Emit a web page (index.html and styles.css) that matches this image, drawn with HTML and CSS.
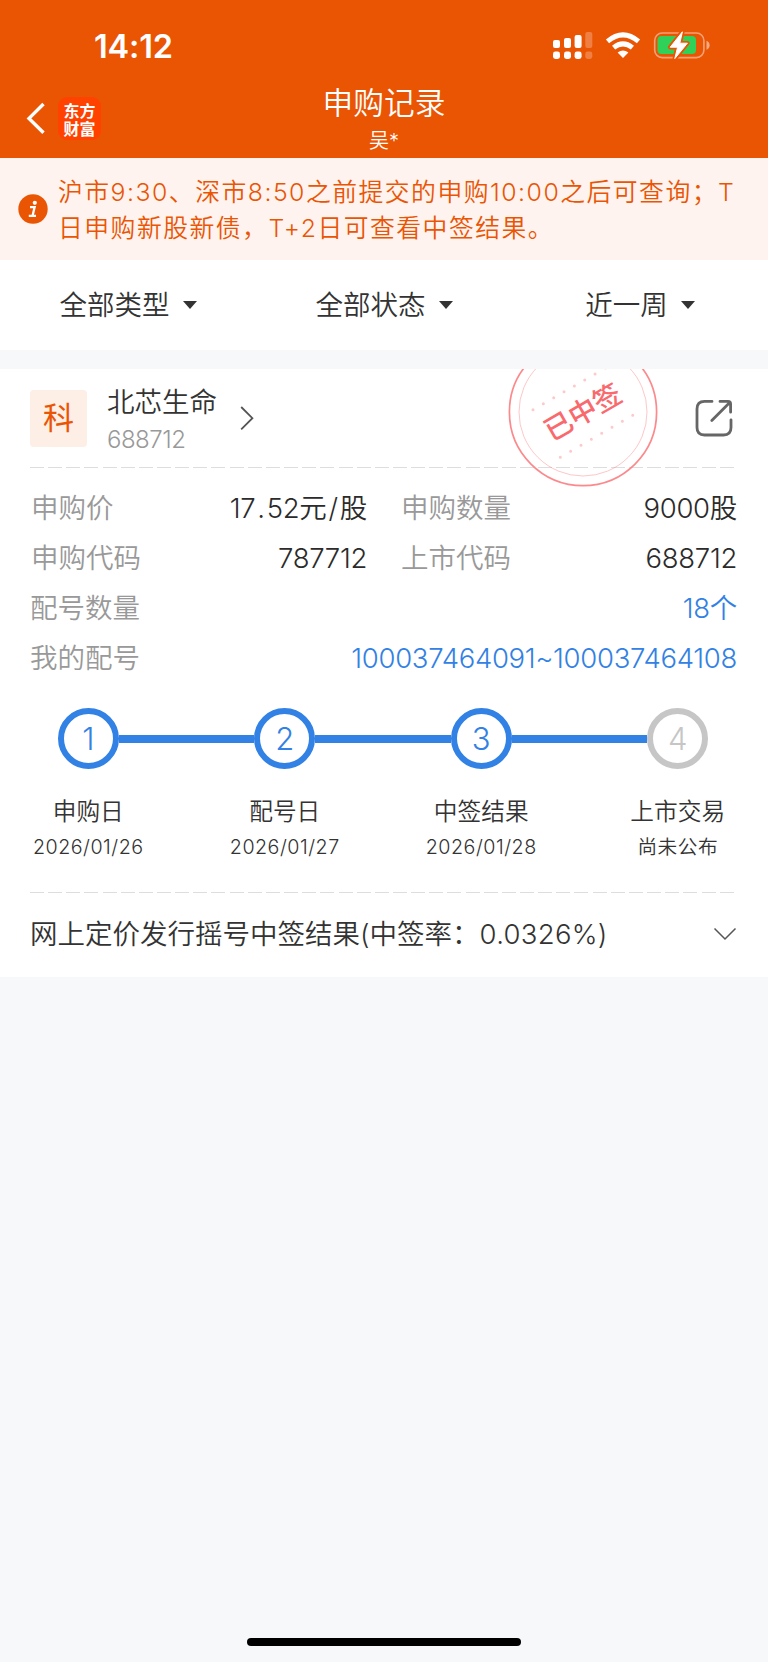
FILE: index.html
```html
<!doctype html>
<html lang="zh-CN">
<head>
    <meta charset="UTF-8">
    <title>申购记录</title>
    <link rel="stylesheet" href="styles.css">
</head>
<body>
    <div class="header">
        <div class="status">
            <span class="time">14:12</span>
            <svg class="status-icons" width="160" height="30" viewBox="0 0 160 30">
                <g fill="#fff">
                    <rect x="1" y="9" width="7" height="8" rx="2"/>
                    <rect x="12" y="7" width="7" height="10" rx="2"/>
                    <rect x="22.6" y="4" width="7" height="13" rx="2"/>
                    <rect x="33.3" y="1" width="7" height="16" rx="2" opacity=".25"/>
                    <rect x="1" y="20.5" width="7" height="7.5" rx="2.4"/>
                    <rect x="12" y="20.5" width="7" height="7.5" rx="2.4"/>
                    <rect x="22.6" y="20.5" width="7" height="7.5" rx="2.4"/>
                    <rect x="33.3" y="20.5" width="7" height="7.5" rx="2.4" opacity=".25"/>
                </g>
                <g fill="none" stroke="#fff" stroke-width="5">
                    <path d="M55.5 10.4 Q71 -2.6 86.5 10.4"/>
                    <path d="M61.6 16.6 Q71 9 80.4 16.6"/>
                </g>
                <path d="M65.6 21.6 Q71 17.4 76.4 21.6 L71 27 Z" fill="#fff"/>
                <rect x="102.7" y="2" width="49.2" height="24.6" rx="7.5" fill="none" stroke="#fff" stroke-width="1.6" opacity=".45"/>
                <path d="M154.5 9.8 Q157.6 11 157.6 14.3 Q157.6 17.6 154.5 18.8 Z" fill="#fff" opacity=".5"/>
                <rect x="105.5" y="5" width="38.5" height="18" rx="4" fill="#30d158"/>
                <path d="M130.4 .8 L118.2 16.2 H125.6 L122.8 27.6 L135.4 12.2 H127.8 Z" fill="#fff" stroke="#ea5504" stroke-width="4.5" stroke-linejoin="round"/>
                <path d="M130.4 .8 L118.2 16.2 H125.6 L122.8 27.6 L135.4 12.2 H127.8 Z" fill="#fff" stroke="#fff" stroke-width="1" stroke-linejoin="round"/>
            </svg>
        </div>
        <div class="nav">
            <div class="nav-left">
                <svg width="20" height="34" viewBox="0 0 20 34" fill="none" stroke="#fff" stroke-width="3.4">
                    <path d="M17.5 3 L3 17.4 L17.5 31.8"/>
                </svg>
                <div class="logo">东方<br>财富</div>
            </div>
            <div class="nav-title">
                <h1>申购记录</h1>
                <p>吴*</p>
            </div>
            <div class="nav-right"></div>
        </div>
    </div>

    <div class="notice">
        <svg width="30" height="30" viewBox="0 0 30 30">
            <circle cx="15" cy="15" r="14.7" fill="#ea5504"/>
            <circle cx="16.8" cy="8.8" r="2.1" fill="#fff"/>
            <path d="M12 13.2 H16.6 L14.6 21.6 M10.8 21.8 H18" fill="none" stroke="#fff" stroke-width="2.3"/>
        </svg>
        <p>沪市9:30、深市8:50之前提交的申购10:00之后可查询；T<br>日申购新股新债，T+2日可查看中签结果。</p>
    </div>

    <ul class="filter">
        <li>全部类型</li>
        <li>全部状态</li>
        <li>近一周</li>
    </ul>

    <div class="card">
        <!-- 中签印章 -->
        <svg class="stamp" width="150" height="150" viewBox="0 0 150 150">
            <g fill="none" stroke="#fb7478">
                <circle cx="75" cy="75" r="73.6" stroke-width="1.7" opacity=".85"/>
                <circle cx="75" cy="75" r="64" opacity=".4"/>
            </g>
            <g fill="none" stroke="#fb7478" stroke-width="3" stroke-linecap="round" stroke-dasharray="0 11.95" opacity=".38">
                <path d="M25 72.8 L98 30.6"/>
                <path d="M52.3 120.2 L125.3 78"/>
            </g>
            <text x="75" y="85" transform="rotate(-30 75 75)" text-anchor="middle">已中签</text>
        </svg>

        <div class="stock">
            <div class="tag">科</div>
            <div class="stock-name">
                <h2>北芯生命</h2>
                <p>688712</p>
            </div>
            <svg width="14" height="26" viewBox="0 0 14 26" fill="none" stroke="#555" stroke-width="1.8">
                <path d="M1.2 2 L12.4 13.2 L1.2 24.4"/>
            </svg>
            <svg class="share" width="40" height="40" viewBox="0 0 40 40" fill="none" stroke="#666" stroke-width="2.8" stroke-linecap="round" stroke-linejoin="round">
                <path d="M18 3.4 H10.5 Q3 3.4 3 11 V29.5 Q3 37 10.5 37 H29.5 Q37 37 37 29.5 V21.8"/>
                <path d="M26 3.4 H34 Q36.6 3.4 36.6 6 V14.2 M36 4.2 L17.8 22.4"/>
            </svg>
        </div>
        <div class="dash"></div>

        <div class="info">
            <div class="row">
                <div class="cell"><span>申购价</span><b>17<i>.</i>52元<i>/</i>股</b></div>
                <div class="cell"><span>申购数量</span><b>9000股</b></div>
            </div>
            <div class="row">
                <div class="cell"><span>申购代码</span><b>787712</b></div>
                <div class="cell"><span>上市代码</span><b>688712</b></div>
            </div>
            <div class="row link"><span>配号数量</span><b>18个</b></div>
            <div class="row link"><span>我的配号</span><b>100037464091~100037464108</b></div>
        </div>

        <ul class="steps">
            <li>
                <div class="rail"><em>1</em></div>
                <h3>申购日</h3>
                <p>2026/01/26</p>
            </li>
            <li>
                <div class="rail"><em>2</em></div>
                <h3>配号日</h3>
                <p>2026/01/27</p>
            </li>
            <li>
                <div class="rail"><em>3</em></div>
                <h3>中签结果</h3>
                <p>2026/01/28</p>
            </li>
            <li class="wait">
                <div class="rail"><em>4</em></div>
                <h3>上市交易</h3>
                <p>尚未公布</p>
            </li>
        </ul>
        <div class="dash"></div>

        <div class="result">
            <span>网上定价发行摇号中签结果(中签率：<i>0.0326%)</i></span>
            <svg width="24" height="14" viewBox="0 0 24 14" fill="none" stroke="#555" stroke-width="1.5">
                <path d="M1.5 1.5 L12 12 L22.5 1.5"/>
            </svg>
        </div>
    </div>

    <div class="home-bar"></div>
</body>
</html>
```

FILE: styles.css
```css
*{
    margin:0;
    padding:0;
    box-sizing:border-box;
}
body{
    display:flex;
    flex-direction:column;
    height:1662px;
    background:#f6f8fa;
    color:#333;
    font-family:Inter,"Noto Sans CJK SC",sans-serif;
    font-size:27.5px;
    font-weight:350;
    overflow:hidden;
}
ul{
    list-style:none;
}
h1,h2,h3,b{
    font-weight:350;
}
i,em{
    font-style:normal;
}
svg{
    display:block;
    flex:none;
}

/* 顶部 */
.header{
    height:158px;
    background:#ea5504;
    color:#fff;
}
.status{
    display:flex;
    justify-content:space-between;
    padding:31px 56px 0 94px;
    height:82px;
}
.time{
    font-size:32.5px;
    font-weight:600;
    line-height:32px;
    letter-spacing:-0.2px;
}
.nav{
    display:flex;
    height:76px;
}
.nav-left,.nav-right{
    display:flex;
    width:200px;
    padding:15px 0 0 26px;
}
.nav-left svg{
    margin:4px 12px 0 0;
}
.logo{
    width:43px;
    height:43px;
    padding-top:5px;
    border-radius:9px;
    background:#ff4200;
    text-align:center;
    font-size:16px;
    font-weight:700;
    line-height:18px;
}
.nav-title{
    flex:1;
    text-align:center;
}
.nav-title h1{
    font-size:30.7px;
    line-height:42px;
}
.nav-title p{
    font-size:20px;
    line-height:34px;
}

/* 提示 */
.notice{
    display:flex;
    height:102px;
    padding:16px 0 0 18px;
    background:#fef3ee;
    color:#ea5504;
}
.notice svg{
    margin:20px 10px 0 0;
}
.notice p{
    font-size:24.8px;
    line-height:36px;
    letter-spacing:1.5px;
    white-space:nowrap;
}

/* 筛选 */
.filter{
    display:flex;
    height:90px;
    background:#fff;
    line-height:90px;
}
.filter li{
    display:flex;
    flex:1;
    align-items:center;
    justify-content:center;
}
.filter li:after{
    content:"";
    margin-left:13px;
    border:7px solid transparent;
    border-top:8px solid #333;
    border-bottom:0;
}

/* 记录卡片 */
.card{
    position:relative;
    height:608px;
    margin-top:19px;
    padding:0 31px 0 30px;
    background:#fff;
    overflow:hidden;
}
.stamp{
    position:absolute;
    left:508px;
    top:-32px;
}
.stamp text{
    fill:#f96a6e;
    font-size:28px;
    font-weight:500;
}
.stock{
    display:flex;
    height:98px;
    padding-top:21px;
}
.tag{
    width:57px;
    height:57px;
    border-radius:4px;
    background:#fdeee6;
    color:#ea5504;
    font-size:31px;
    font-weight:400;
    line-height:56px;
    text-align:center;
}
.stock-name{
    width:133px;
    margin-left:20px;
}
.stock-name h2{
    margin-top:-8px;
    font-size:27.5px;
    line-height:41px;
}
.stock-name p{
    color:#999;
    font-size:24px;
    line-height:33px;
    letter-spacing:-0.5px;
}
.stock-name + svg{
    margin-top:15px;
}
.stock .share{
    margin:8px 3px 0 auto;
}
.dash{
    height:1px;
    margin-right:2px;
    background:repeating-linear-gradient(90deg,#ddd 0,#ddd 14px,transparent 14px,transparent 18.15px);
}
.info{
    padding-top:15px;
}
.row{
    display:flex;
    justify-content:space-between;
    height:50px;
    line-height:50px;
}
.cell{
    display:flex;
    justify-content:space-between;
    width:337px;
    padding-left:1px;
}
.row span{
    color:#999;
}
.row b{
    color:#2b2b2b;
    letter-spacing:-0.3px;
}
.row i{
    margin:0 2px;
}
.link b{
    color:#3281e4;
}

/* 进度 */
.steps{
    display:flex;
    height:209px;
    margin:0 -39px 0 -40px;
    padding-top:25px;
    text-align:center;
}
.steps li{
    flex:1;
}
.rail{
    display:flex;
    align-items:center;
}
.rail:before,.rail:after{
    content:"";
    flex:1;
    height:8px;
    background:#3281e4;
}
.steps li:first-child .rail:before,
.steps li:last-child .rail:after{
    background:none;
}
.rail em{
    width:61px;
    height:61px;
    border:6px solid #3281e4;
    border-radius:50%;
    color:#3281e4;
    font-size:31px;
    font-weight:300;
    line-height:49px;
}
.wait .rail em{
    border-color:#c6c6c6;
    color:#c6c6c6;
}
.steps h3{
    margin-top:25px;
    font-size:23.7px;
    line-height:36px;
}
.steps p{
    font-size:19.7px;
    line-height:34px;
    letter-spacing:0.5px;
}

.result{
    display:flex;
    align-items:center;
    justify-content:space-between;
    height:82px;
}
.result span{
    margin-top:-4px;
}
.result i{
    letter-spacing:0.3px;
}

.home-bar{
    width:274px;
    height:8px;
    margin:auto auto 16px;
    border-radius:4px;
    background:#000;
}
```
